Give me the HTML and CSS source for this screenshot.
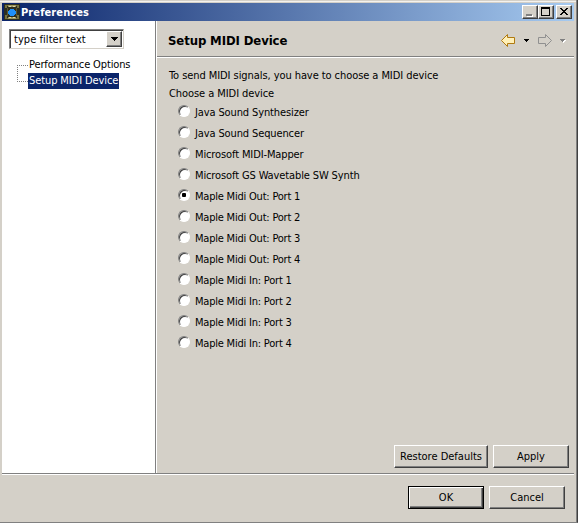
FILE: index.html
```html
<!DOCTYPE html>
<html lang="en">
<head>
<meta charset="utf-8">
<title>Preferences</title>
<link rel="stylesheet" href="styles.css">
</head>
<body>
<div class="window">
  <header class="titlebar">
    <svg class="app-icon" width="16" height="16" viewBox="0 0 16 16" shape-rendering="crispEdges">
      <rect width="16" height="16" fill="#2c2e20"/>
      <path d="M1 1h4v1H3v2H1zM11 1h4v3h-2V2h-2zM1 11h2v3h2v1H1zM13 11h2v4h-4v-1h2z" fill="#77733f"/>
      <path d="M4 1h8v2H4zM4 13h8v2H4z" fill="#9c9660"/>
      <path d="M3 4h1v8H3zM12 4h1v8h-1z" fill="#5a5630"/>
      <path d="M5 2h2v1H5zM9 2h2v1H9zM5 13h2v1H5zM9 13h2v1H9z" fill="#dcd6a0"/>
      <path d="M6 5h4v1h1v1h1v3h-1v1h-1v1H6v-1H5v-1H4V7h1V6h1z" fill="#2090f8"/>
    </svg>
    <h1>Preferences</h1>
    <div class="controls">
      <button class="ctl" aria-label="Minimize"><svg width="12" height="10" shape-rendering="crispEdges"><path d="M3 8h6v2H3z" fill="#fff"/><path d="M2 7h6v2H2z" fill="#808080"/></svg></button>
      <button class="ctl" aria-label="Maximize"><svg width="12" height="10" shape-rendering="crispEdges"><path d="M1 0h9v9H1zM2 2v6h7V2z" fill="#000" fill-rule="evenodd"/></svg></button>
      <button class="ctl close" aria-label="Close"><svg width="12" height="10" shape-rendering="crispEdges"><path d="M2 1h2v1h1v1h2V2h1V1h2v1H9v1H8v1H7v1h1v1h1v1h1v1H8V7H7V6H5v1H4v1H2V7h1V6h1V5h1V4H4V3H3V2H2z"/></svg></button>
    </div>
  </header>
  <div class="main">
    <nav class="sidebar">
      <div class="combo"><span>type filter text</span><i class="drop"><svg width="7" height="4" shape-rendering="crispEdges"><path d="M0 0h7v1H6v1H5v1H4v1H3V3H2V2H1V1H0z"/></svg></i></div>
      <ul class="tree">
        <li class="first"><span>Performance Options</span></li>
        <li class="last"><span class="selected">Setup MIDI Device</span></li>
      </ul>
    </nav>
    <section class="page">
      <div class="page-head">
        <h2>Setup MIDI Device</h2>
        <svg class="nav" width="68" height="14" viewBox="0 0 68 14">
          <path d="M.5 6.5L6.500.5V3.500H13.500V9.500H6.500V12.500z" fill="#fff0b8" stroke="#b07a10"/>
          <path d="M23 5h5v1h-1v1h-1v1h-1V7h-1V6h-1z" shape-rendering="crispEdges"/>
          <path d="M50.500 6.500L44.500.5V3.500H37.500V9.500H44.500V12.500z" fill="#d4d0c8" stroke="#909090"/>
          <path d="M60 6h5v1h-1v1h-1v1h-1V8h-1V7h-1z" fill="#fff" shape-rendering="crispEdges"/>
          <path d="M59 5h5v1h-1v1h-1v1h-1V7h-1V6h-1z" fill="#808080" shape-rendering="crispEdges"/>
        </svg>
      </div>
      <div class="page-body">
        <p>To send MIDI signals, you have to choose a MIDI device</p>
        <p>Choose a MIDI device</p>
        <div class="options">
          <label><i class="radio"></i><span>Java Sound Synthesizer</span></label>
          <label><i class="radio"></i><span>Java Sound Sequencer</span></label>
          <label><i class="radio"></i><span>Microsoft MIDI-Mapper</span></label>
          <label><i class="radio"></i><span>Microsoft GS Wavetable SW Synth</span></label>
          <label class="port"><i class="radio on"></i><span>Maple Midi Out: Port 1</span></label>
          <label class="port"><i class="radio"></i><span>Maple Midi Out: Port 2</span></label>
          <label class="port"><i class="radio"></i><span>Maple Midi Out: Port 3</span></label>
          <label class="port"><i class="radio"></i><span>Maple Midi Out: Port 4</span></label>
          <label class="port"><i class="radio"></i><span>Maple Midi In: Port 1</span></label>
          <label class="port"><i class="radio"></i><span>Maple Midi In: Port 2</span></label>
          <label class="port"><i class="radio"></i><span>Maple Midi In: Port 3</span></label>
          <label class="port"><i class="radio"></i><span>Maple Midi In: Port 4</span></label>
        </div>
      </div>
      <div class="page-actions">
        <button class="btn wide">Restore Defaults</button>
        <button class="btn">Apply</button>
      </div>
    </section>
  </div>
  <footer class="footer">
    <button class="btn default">OK</button>
    <button class="btn">Cancel</button>
  </footer>
</div>
</body>
</html>
```
FILE: styles.css
```css
* { box-sizing: border-box; }
body { margin: 0; font: 11px/13px "DejaVu Sans Condensed", "DejaVu Sans", sans-serif; font-stretch: condensed; color: #000; }
h1, h2, p, ul { margin: 0; padding: 0; }
.window { width: 578px; height: 523px; padding: 3px 3px 0 2px; background: #d4d0c8; border-right: 1px solid #404040; border-bottom: 1px solid #808080; box-shadow: inset -1px 0 #808080, inset 0 1px #d4d0c8, inset 0 2px #f4f2ee; display: flex; flex-direction: column; }
.titlebar { height: 18px; display: flex; align-items: center; padding: 0 2px; background: linear-gradient(90deg, #0a246a, #a6caf0); }
.app-icon { margin-right: 1px; }
.titlebar h1 { flex: 1; font-size: 11px; color: #fff; letter-spacing: 0.1px; }
.controls { display: flex; }
.ctl { width: 16px; height: 14px; padding: 0; border: 1px solid; border-color: #fff #404040 #404040 #fff; box-shadow: inset -1px -1px #808080; background: #d4d0c8; display: flex; align-items: center; justify-content: center; }
.close { margin-left: 2px; }
.main { height: 453px; display: flex; border-bottom: 1px solid #808080; }
.sidebar { width: 153px; background: #fff; padding: 8px 0 0 7px; }
.combo { width: 115px; height: 20px; display: flex; justify-content: space-between; border: 1px solid; border-color: #808080 #d4d0c8 #d4d0c8 #808080; box-shadow: inset 1px 1px #404040; padding: 1px 1px 1px 4px; }
.combo span { line-height: 17px; letter-spacing: 0.05px; }
.drop { width: 16px; height: 16px; display: flex; align-items: center; justify-content: center; background: #d4d0c8; border: 1px solid; border-color: #fff #404040 #404040 #fff; box-shadow: inset -1px -1px #808080; }
.tree { list-style: none; margin-top: 8px; padding-left: 8px; }
.tree li { height: 16px; display: flex; align-items: center; }
.tree li::before { content: ""; width: 11px; height: 16px; background: repeating-linear-gradient(90deg, #808080 0 1px, transparent 1px 2px) 0 8px / 100% 1px no-repeat, repeating-linear-gradient(#808080 0 1px, transparent 1px 2px) 0 0 / 1px 8px no-repeat; }
.tree .first::before { background-position: 0 8px, 0 8px; }
.tree span { line-height: 16px; white-space: nowrap; padding: 0 1px; letter-spacing: -0.14px; }
.tree .selected { background: #0a246a; color: #fff; letter-spacing: -0.1px; }
.page { flex: 1; display: flex; flex-direction: column; border-left: 1px solid #808080; box-shadow: inset 1px 0 #fff; }
.page-head { height: 36px; margin-left: 1px; padding: 2px 5px 0 11px; display: flex; align-items: center; justify-content: space-between; border-bottom: 1px solid #808080; box-shadow: 0 1px #fff; }
.page-head h2 { font-size: 13px; line-height: 16px; letter-spacing: -0.1px; padding-top: 2px; }
.nav { margin-top: 2px; }
.page-body { flex: 1; padding: 12px 0 0 13px; }
.page-body p { height: 18px; line-height: 13px; letter-spacing: -0.07px; }
.options label { height: 21px; display: flex; padding-left: 9px; letter-spacing: -0.12px; }
.options .port { letter-spacing: -0.21px; }
.radio { width: 12px; height: 12px; margin-right: 5px; border-radius: 50%; background: #fff; border: 1px solid; border-color: #808080 #fff #fff #808080; box-shadow: inset 1px 1px #404040; }
.on { background: radial-gradient(circle, #000 2px, #fff 2.5px); }
.options span { line-height: 14px; padding-top: 1px; }
.page-actions { display: flex; gap: 5px; justify-content: flex-end; padding: 0 5px 5px; }
.btn { width: 76px; height: 23px; padding: 0; font: inherit; background: #d4d0c8; border: 1px solid; border-color: #fff #404040 #404040 #fff; box-shadow: inset -1px -1px #808080; }
.wide { width: 94px; }
.footer { display: flex; justify-content: flex-end; gap: 5px; padding: 12px 9px 0; box-shadow: inset 0 1px #fff; }
.default { border-color: #000; box-shadow: inset 1px 1px #fff, inset -1px -1px #404040, inset -2px -2px #808080; }
```
